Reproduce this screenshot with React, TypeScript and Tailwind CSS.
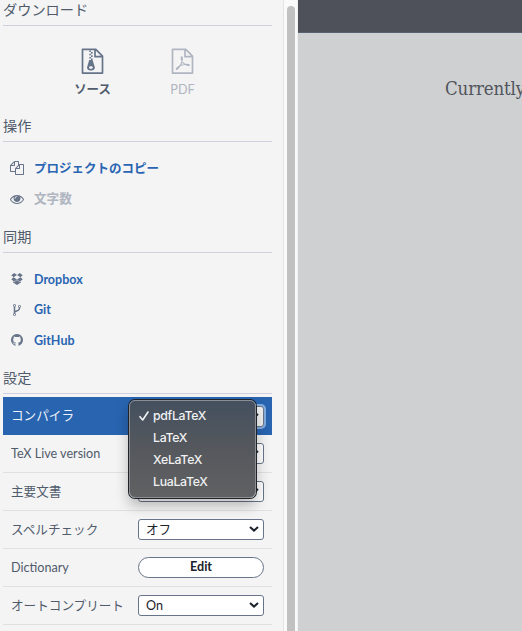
import type { ReactNode } from "react";

const FILES =
  "M1696 384q40 0 68 28t28 68v1216q0 40-28 68t-68 28h-960q-40 0-68-28t-28-68v-288h-544q-40 0-68-28t-28-68v-672q0-40 20-88t48-76l408-408q28-28 76-48t88-20h416q40 0 68 28t28 68v328q68-40 128-40h416zm-544 213l-299 299h299v-299zm-640-384l-299 299h299v-299zm196 647l316-316v-416h-384v416q0 40-28 68t-68 28h-416v640h512v-256q0-40 20-88t48-76zm956 804v-1152h-384v416q0 40-28 68t-68 28h-416v640h896z";
const EYE =
  "M1664 960q-152-236-381-353 61 104 61 225 0 185-131.5 316.5t-316.5 131.5-316.5-131.5-131.5-316.5q0-121 61-225-229 117-381 353 133 205 333.5 326.5t434.5 121.5 434.5-121.5 333.5-326.5zm-720-384q0-20-14-34t-34-14q-125 0-214.5 89.5t-89.5 214.5q0 20 14 34t34 14 34-14 14-34q0-86 61-147t147-61q20 0 34-14t14-34zm848 384q0 34-20 69-140 230-376.5 368.5t-499.5 138.5-499.5-139-376.5-368q-20-35-20-69t20-69q140-229 376.5-368t499.5-139 499.5 139 376.5 368q20 35 20 69z";
const DROPBOX =
  "M540 120L160 400l300 262 436-290zM1252 120l380 280-300 262-436-290zM160 930l300-268 436 296-356 280zM1632 930l-300-268-436 296 356 280zM896 1024l-354 290-152-94v126l506 310 506-310v-126l-152 94z";
const FORK =
  "M672 1472q0-40-28-68t-68-28-68 28-28 68 28 68 68 28 68-28 28-68zm0-1152q0-40-28-68t-68-28-68 28-28 68 28 68 68 28 68-28 28-68zm640 128q0-40-28-68t-68-28-68 28-28 68 28 68 68 28 68-28 28-68zm96 0q0 52-26 96.5t-70 69.5q-2 287-226 414-67 38-203 81-128 40-169.5 71t-41.5 100v26q44 25 70 69.5t26 96.5q0 80-56 136t-136 56-136-56-56-136q0-52 26-96.5t70-69.5v-820q-44-25-70-69.5t-26-96.5q0-80 56-136t136-56 136 56 56 136q0 52-26 96.5t-70 69.5v497q54-26 154-57 55-17 87.5-29.5t70.5-31 59-39.5 40.5-51 28-69.5 8.5-91.5q-44-25-70-69.5t-26-96.5q0-80 56-136t136-56 136 56 56 136z";
const GITHUB =
  "M896 128q209 0 385.5 103t279.5 279.5 103 385.5q0 251-146.5 451.5t-378.5 277.5q-27 5-40-7t-13-30q0-3 .5-76.5t.5-134.5q0-97-52-142 57-6 102.5-18t94-39 81-66.5 53-105 20.5-150.5q0-119-79-206 37-91-8-204-28-9-81 11t-92 44l-38 24q-93-26-192-26t-192 26q-16-11-42.5-27t-83.5-38.5-85-13.5q-45 113-8 204-79 87-79 206 0 85 20.5 150t52.5 105 80.5 67 94 39 102.5 18q-39 36-49 103-21 10-45 15t-57 5-65.5-21.5-55.5-62.5q-19-32-48.5-52t-49.5-24l-20-3q-21 0-29 4.5t-5 11.5 9 14 13 12l7 5q22 10 43.5 38t31.5 51l10 23q13 38 44 61.5t67 30 69.5 7 55.5-3.5l23-4q0 38 .5 88.5t.5 54.5q0 18-13 30t-40 7q-232-77-378.5-277.5t-146.5-451.5q0-209 103-385.5t279.5-279.5 385.5-103z";

function Heading({ children }: { children: ReactNode }) {
  return (
    <h4 className="flex h-8 items-center border-b border-[#cfd2de] pt-[2px] text-[14.2px] leading-none text-[#505b6c]">
      {children}
    </h4>
  );
}

function Item({ icon, label, muted = false }: { icon: string; label: string; muted?: boolean }) {
  return (
    <li className="flex h-[30.7px] items-center pl-[7px]">
      <svg viewBox="0 0 1792 1792" className="mb-[1px] mr-[10px] size-[14px] fill-[#677489]">
        <path d={icon} />
      </svg>
      <span
        className={
          muted
            ? "pt-[1px] text-[12.6px] font-bold leading-none text-[#b0b6c1]"
            : "pt-[1px] text-[12.5px] font-bold leading-none text-[#2965b2]"
        }
      >
        {label}
      </span>
    </li>
  );
}

function Row({ label, children, active = false }: { label: string; children: ReactNode; active?: boolean }) {
  return (
    <div
      className={
        active
          ? "flex h-[38px] items-center justify-between bg-[#2864b0] px-2 text-[#eef3fa]"
          : "flex h-[38px] items-center justify-between border-b border-[#e0e0e1] px-2 text-[#505b6c]"
      }
    >
      <span className="whitespace-nowrap pt-[1px] text-[12.6px] leading-none">{label}</span>
      {children}
    </div>
  );
}

function Select({ value, focused = false }: { value?: string; focused?: boolean }) {
  return (
    <div
      className={
        focused
          ? "flex h-[21px] w-[126px] items-center justify-between rounded-[3px] border border-[#677489] bg-[#f2f2f2] pl-[7px] pr-1 ring-2 ring-[#82acdf]"
          : "flex h-[21px] w-[126px] items-center justify-between rounded-[3px] border border-[#677489] bg-white pl-[7px] pr-1"
      }
    >
      <span className="pt-[1px] text-[12.6px] leading-none text-[#1b222c]">{value}</span>
      <svg viewBox="0 0 10 8" className="mb-[1px] h-2 w-[10px] fill-none stroke-[#1b222c]" strokeWidth="2">
        <path d="M1 2l4 3.6L9 2" />
      </svg>
    </div>
  );
}

function DownloadIcon({ pdf = false }: { pdf?: boolean }) {
  return (
    <svg
      viewBox="0 0 23 27"
      className={pdf ? "h-[27px] w-[23px] text-[#b0b6c1]" : "h-[27px] w-[23px] text-[#66748a]"}
      fill="none"
      stroke="currentColor"
      strokeWidth="1.7"
      strokeLinejoin="round"
    >
      <path d="M1.5 1.4h13.3l6.7 6.8v16.9h-20zM14 1.6v7.1h7.3" />
      {pdf ? (
        <path
          strokeWidth="1.1"
          d="M10.7 8.8c1.2 0 .7 4-.3 6.2-1.5 3.4-3.8 6.3-5 6.5-.8-.6 1.4-3 5-4.3 3.6-1.2 8-1.3 8-.1 0 1.1-4.2.1-6.3-2.2-1.8-2-2.5-6.1-1.4-6.1z"
        />
      ) : (
        <>
          <path strokeWidth="1.6" strokeDasharray="1.6 1.6" d="M9.1 2.5v11M10.8 4.1v10" />
          <path
            fill="currentColor"
            stroke="none"
            fillRule="evenodd"
            d="M8.2 12h3.4l2.1 6.8c.7 2.6-1.4 3.8-3.8 3.8s-4.4-1.3-3.7-3.8zM8 19.6c0 .9 1 1.3 1.9 1.3s1.9-.4 1.9-1.3-1-1.3-1.9-1.3-1.9.4-1.9 1.3z"
          />
        </>
      )}
    </svg>
  );
}

export default function App() {
  return (
    <div className="flex h-[631px] w-[522px] overflow-hidden bg-[#f4f4f4] font-['Lato','Noto_Sans_CJK_JP',sans-serif]">
      <aside className="h-full w-[284px] shrink-0 overflow-hidden border-r border-[#e5e5e5] pl-[3px] pr-[11px]">
        <div className="-mt-1.5">
          <Heading>ダウンロード</Heading>
        </div>
        <div className="flex h-[84px] justify-center pt-[22px]">
          <div className="flex w-[90px] flex-col items-center">
            <DownloadIcon />
            <span className="mt-[9px] text-[12.4px] font-bold leading-none text-[#505b6c]">ソース</span>
          </div>
          <div className="flex w-[90px] flex-col items-center">
            <DownloadIcon pdf />
            <span className="mt-[9px] text-[12.6px] leading-none text-[#b0b6c1]">PDF</span>
          </div>
        </div>
        <Heading>操作</Heading>
        <ul className="h-[79px] pt-[11px]">
          <Item icon={FILES} label="プロジェクトのコピー" />
          <Item icon={EYE} label="文字数" muted />
        </ul>
        <Heading>同期</Heading>
        <ul className="h-[109px] pt-[11px]">
          <Item icon={DROPBOX} label="Dropbox" />
          <Item icon={FORK} label="Git" />
          <Item icon={GITHUB} label="GitHub" />
        </ul>
        <Heading>設定</Heading>
        <div className="relative pt-[3px]">
          <Row label="コンパイラ" active>
            <Select focused />
          </Row>
          <Row label="TeX Live version">
            <Select />
          </Row>
          <Row label="主要文書">
            <Select />
          </Row>
          <Row label="スペルチェック">
            <Select value="オフ" />
          </Row>
          <Row label="Dictionary">
            <button className="h-[21px] w-[126px] rounded-full border border-[#677489] bg-white text-[12.6px] font-bold leading-none text-[#1b222c]">
              Edit
            </button>
          </Row>
          <Row label="オートコンプリート">
            <Select value="On" />
          </Row>
          <ul className="absolute left-[126px] top-[6px] h-[98px] w-[127px] rounded-[6px] border border-[#8b8f94] bg-linear-to-b from-[#44505f] via-[#55585d] to-[#606162] pt-[4px] font-['Inter',sans-serif] text-[12.3px] font-medium tracking-[-0.3px] text-[#f0f1f2] shadow-[0_0_0_1px_#202327,0_7px_14px_rgba(0,0,0,0.28)]">
            {["pdfLaTeX", "LaTeX", "XeLaTeX", "LuaLaTeX"].map((name, i) => (
              <li key={name} className="flex h-[22px] items-center pl-[9px]">
                <span className="w-[14px]">
                  {i === 0 && (
                    <svg viewBox="0 0 10 10" className="size-[10px] fill-none stroke-[#f0f1f2]" strokeWidth="1.6" strokeLinecap="round" strokeLinejoin="round">
                      <path d="M1 5.7L3.7 9 9 1" />
                    </svg>
                  )}
                </span>
                {name}
              </li>
            ))}
          </ul>
        </div>
      </aside>
      <div className="flex w-[14px] shrink-0 border-r border-[#f0f0f0] bg-[#fafafa] pl-[3px] pt-[6px]">
        <div className="h-[640px] w-2 shrink-0 rounded-t-full bg-[#c1c1c1]" />
      </div>
      <main className="flex min-w-0 flex-1 flex-col overflow-hidden bg-[#cfd0d2]">
        <header className="h-[33px] shrink-0 border-b border-[#596273] bg-[#4e5159]" />
        <p className="whitespace-nowrap pl-[147px] pt-[44px] font-['DejaVu_Serif_Condensed','DejaVu_Serif',serif] text-[18.5px] leading-6 tracking-[-0.15px] text-[#50545c]">
          Currently
        </p>
      </main>
    </div>
  );
}
